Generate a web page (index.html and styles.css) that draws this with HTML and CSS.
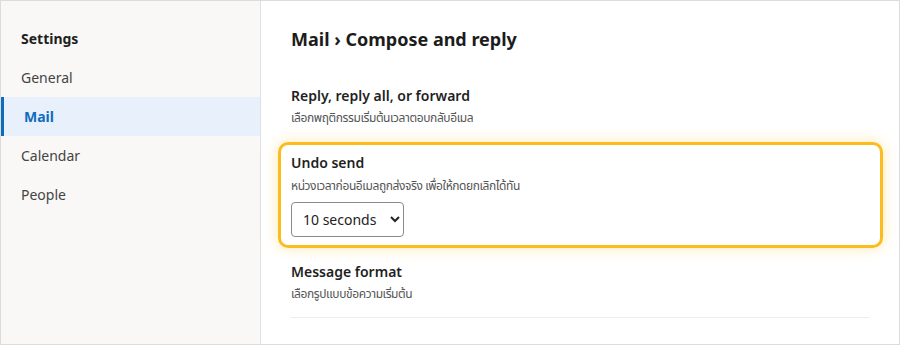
FILE: index.html
```html
<!DOCTYPE html>
<html lang="en">
<head>
<meta charset="utf-8">
<title>Settings</title>
<link rel="stylesheet" href="styles.css">
</head>
<body>
<div class="frame">
  <nav class="sidebar">
    <div class="side-title">Settings</div>
    <a class="side-item">General</a>
    <a class="side-item active">Mail</a>
    <a class="side-item">Calendar</a>
    <a class="side-item">People</a>
  </nav>
  <main class="main">
    <h1 class="page-title">Mail › Compose and reply</h1>
    <section class="setting first">
      <div class="setting-title">Reply, reply all, or forward</div>
      <div class="setting-desc" lang="th">เลือกพฤติกรรมเริ่มต้นเวลาตอบกลับอีเมล</div>
    </section>
    <section class="setting highlight">
      <div class="setting-title">Undo send</div>
      <div class="setting-desc" lang="th">หน่วงเวลาก่อนอีเมลถูกส่งจริง เพื่อให้กดยกเลิกได้ทัน</div>
      <select class="select">
        <option>5 seconds</option>
        <option selected>10 seconds</option>
        <option>20 seconds</option>
        <option>30 seconds</option>
      </select>
    </section>
    <section class="setting last">
      <div class="setting-title">Message format</div>
      <div class="setting-desc" lang="th">เลือกรูปแบบข้อความเริ่มต้น</div>
    </section>
  </main>
</div>
</body>
</html>
```

FILE: styles.css
```css
* { box-sizing: border-box; }
html, body { margin: 0; padding: 0; background: #fff; }
body {
  font-family: "Noto Sans", "Open Sans", sans-serif;
  color: #222;
}
.frame {
  width: 900px;
  height: 345px;
  border: 1px solid #dcdcdc;
  display: flex;
  overflow: hidden;
}
.sidebar {
  width: 260px;
  flex: none;
  background: #f9f8f6;
  border-right: 1px solid #e0e0e0;
  padding-top: 26px;
}
.side-title {
  font-size: 14px;
  font-weight: 700;
  line-height: 24px;
  padding-left: 20px;
  margin-bottom: 7px;
  color: #1f1f1f;
}
.side-item {
  display: block;
  height: 39px;
  line-height: 39px;
  padding-left: 20px;
  font-size: 14px;
  color: #444;
}
.side-item.active {
  background: #e8f0fb;
  border-left: 3px solid #0f6cbd;
  color: #0f6cbd;
  font-weight: 700;
}
.main {
  flex: 1;
  padding: 26px 30px 0 30px;
}
.page-title {
  margin: 0 0 35px;
  font-size: 18px;
  line-height: 24px;
  font-weight: 700;
  color: #1c1c1c;
}
.setting-title {
  font-size: 14px;
  line-height: 20px;
  font-weight: 600;
  color: #1f1f1f;
}
.setting-desc {
  margin-top: 3px;
  font-family: "Noto Sans Thai", "Noto Sans Thai UI", "Noto Sans", sans-serif;
  font-size: 12px;
  letter-spacing: -0.4px;
  line-height: 18px;
  color: #555;
}
.setting.first { padding-bottom: 15px; }
.setting.highlight {
  margin: 0 -14px 0 -13px;
  padding: 8px 10px 8px 10px;
  border: 3px solid #fbbd1e;
  border-radius: 10px;
  box-shadow: 0 0 14px rgba(251, 189, 30, 0.35);
}
.setting.highlight .setting-desc { margin-top: 4px; }
.select {
  display: block;
  margin-top: 7px;
  width: 113px;
  height: 35px;
  padding: 0 6px 0 7px;
  font-family: "Noto Sans", "Open Sans", sans-serif;
  font-size: 14px;
  color: #222;
  background: #fff;
  border: 1px solid #8a8a8a;
  border-radius: 4px;
}
.setting.last {
  padding-top: 14px;
  padding-bottom: 14px;
  border-bottom: 1px solid #ececec;
}
```
